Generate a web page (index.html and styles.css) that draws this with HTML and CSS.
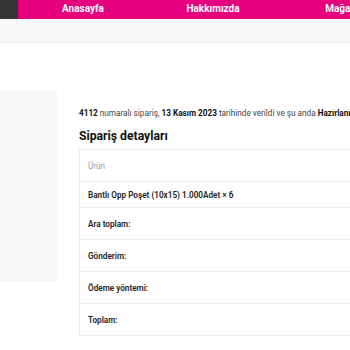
FILE: index.html
```html
<!DOCTYPE html>
<html lang="tr">
<head>
<meta charset="utf-8">
<title>Sipariş</title>
<link rel="stylesheet" href="styles.css">
</head>
<body>
<header class="topbar">
  <div class="logo-box"></div>
  <nav class="nav">
    <a class="nav-item">Anasayfa</a>
    <a class="nav-item">Hakkımızda</a>
    <a class="nav-item">Mağaza</a>
    <a class="nav-item">İletişim</a>
  </nav>
</header>
<div class="subbar"></div>
<div class="page">
  <aside class="sidebar"></aside>
  <main class="main">
    <p class="order-note"><strong>4112</strong> numaralı sipariş, <strong>13 Kasım 2023</strong> tarihinde verildi ve şu anda <strong>Hazırlanıyor</strong> durumunda.</p>
    <h2 class="title">Sipariş detayları</h2>
    <table class="details">
      <thead>
        <tr class="row-head"><th>Ürün</th><th>Toplam</th></tr>
      </thead>
      <tbody>
        <tr class="row-item"><td>Bantlı Opp Poşet (10x15) 1.000Adet × 6</td><td></td></tr>
      </tbody>
      <tfoot>
        <tr class="row-foot"><th>Ara toplam:</th><td></td></tr>
        <tr class="row-foot"><th>Gönderim:</th><td></td></tr>
        <tr class="row-foot"><th>Ödeme yöntemi:</th><td></td></tr>
        <tr class="row-foot"><th>Toplam:</th><td></td></tr>
      </tfoot>
    </table>
  </main>
</div>
</body>
</html>
```
FILE: styles.css
```css
html, body {
  margin: 0;
  padding: 0;
  overflow: hidden;
  background: #fff;
}
body {
  font-family: Roboto, "Noto Sans", sans-serif;
  color: #222;
  width: 350px;
  height: 350px;
}
.topbar {
  display: flex;
  height: 19px;
  width: 800px;
}
.logo-box {
  width: 18px;
  background: #353535;
}
.nav {
  display: flex;
  flex: 1;
  background: #e6007e;
}
.nav-item {
  width: 130px;
  text-align: center;
  color: #fff;
  font-weight: 700;
  font-size: 10px;
  line-height: 17px;
}
.subbar {
  height: 23px;
  background: #f8f8f8;
  border-bottom: 1px solid #e8e8e8;
}
.page {
  display: flex;
  padding-top: 48px;
  width: 900px;
}
.sidebar {
  width: 57px;
  height: 190px;
  background: #f7f7f7;
  flex: none;
}
.main {
  margin-left: 22px;
  padding-top: 18px;
  width: 700px;
}
.order-note {
  margin: 0;
  font-size: 8.2px;
  line-height: 9px;
  white-space: nowrap;
  color: #444;
}
.order-note strong {
  color: #111;
  font-weight: 700;
}
.title {
  margin: 10px 0 5px;
  font-size: 12.2px;
  line-height: 16px;
  font-weight: 700;
  color: #111;
}
.details {
  width: 600px;
  border-collapse: collapse;
  border: 1px solid #ececec;
  font-size: 8.2px;
}
.details th, .details td {
  text-align: left;
  padding: 0 8px;
  border-top: 1px solid #ececec;
}
.row-head th {
  height: 31px;
  font-weight: 400;
  color: #9a9a9a;
}
.row-item td {
  height: 25px;
  font-weight: 600;
  color: #222;
}
.row-foot th, .row-foot td {
  height: 31px;
  font-weight: 600;
  color: #222;
}
```
